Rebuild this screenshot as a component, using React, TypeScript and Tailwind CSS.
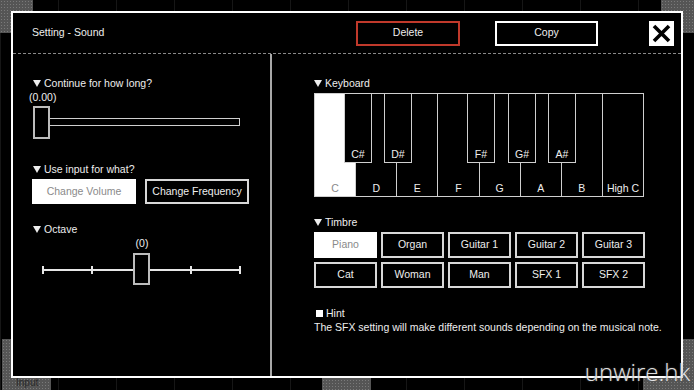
import React from 'react';

const font = "font-['Liberation_Sans','Helvetica',Arial,sans-serif]";

function Caret() {
  return (
    <svg width="8" height="7" viewBox="0 0 8 7" className="mr-[3px] shrink-0">
      <polygon points="0,0 8,0 4,7" fill="#eeeeee" />
    </svg>
  );
}

function Heading({ children }: { children: React.ReactNode }) {
  return (
    <div className="flex items-center h-[14px] text-[10.5px] leading-[14px] text-[#eeeeee]">
      <Caret />
      {children}
    </div>
  );
}

const whiteKeys = ['C', 'D', 'E', 'F', 'G', 'A', 'B', 'High C'];
const blackKeys = [
  { label: 'C#', left: 'left-[29px]' },
  { label: 'D#', left: 'left-[69px]' },
  { label: 'F#', left: 'left-[152px]' },
  { label: 'G#', left: 'left-[193px]' },
  { label: 'A#', left: 'left-[233px]' },
];

const timbres = ['Piano', 'Organ', 'Guitar 1', 'Guitar 2', 'Guitar 3', 'Cat', 'Woman', 'Man', 'SFX 1', 'SFX 2'];

function Keyboard() {
  return (
    <div className="relative mt-[3px] w-[330px] h-[104px] border border-[#cfcfcf] flex">
      {whiteKeys.map((k, i) => (
        <div
          key={k}
          className={
            'flex-1 flex items-end justify-center pb-[1px] text-[10.5px] leading-[14px] ' +
            (i < whiteKeys.length - 1 ? 'border-r border-[#cfcfcf] ' : '') +
            (i === 0 ? 'bg-white text-[#8a8a8a]' : 'text-[#eeeeee]')
          }
        >
          {k}
        </div>
      ))}
      {blackKeys.map((b) => (
        <div
          key={b.label}
          className={`absolute top-[-1px] ${b.left} w-[28px] h-[70px] bg-black border border-[#cfcfcf] flex items-end justify-center pb-[1px] text-[10.5px] leading-[14px] text-[#eeeeee]`}
        >
          {b.label}
        </div>
      ))}
    </div>
  );
}

export default function App() {
  return (
    <div className={`relative w-[694px] h-[390px] bg-black overflow-hidden ${font}`}>
      {/* background canvas */}
      <div className="absolute inset-0 bg-[linear-gradient(to_right,#161616_1px,transparent_1px)] bg-[length:58px_100%]" />
      <div className="absolute left-0 top-0 w-[33px] h-[33px] bg-[#555] bg-[radial-gradient(#7a7a7a_1px,transparent_1px)] bg-[length:3px_3px]" />
      <div className="absolute right-0 top-0 w-[33px] h-[33px] bg-[#555] bg-[radial-gradient(#7a7a7a_1px,transparent_1px)] bg-[length:3px_3px]" />
      <div className="absolute left-[2px] bottom-0 w-[49px] h-[51px] bg-[#555] bg-[radial-gradient(#7a7a7a_1px,transparent_1px)] bg-[length:3px_3px] flex items-end pl-[14px] text-[10px] text-[#2a2a2a]">
        Input
      </div>
      <div className="absolute left-[322px] bottom-0 w-[49px] h-[14px] bg-[#555] bg-[radial-gradient(#7a7a7a_1px,transparent_1px)] bg-[length:3px_3px]" />
      <div className="absolute right-0 bottom-0 w-[51px] h-[51px] bg-[#555] bg-[radial-gradient(#7a7a7a_1px,transparent_1px)] bg-[length:3px_3px]" />

      {/* dialog */}
      <div className="absolute left-[11px] top-[11px] w-[672px] h-[367px] border-2 border-white bg-black flex flex-col">
        <div className="h-[41px] shrink-0 flex items-center border-b border-dashed border-[#8a8a8a] pl-[19px] pr-[7px]">
          <div className="flex-1 text-[10.5px] text-[#eeeeee]">Setting - Sound</div>
          <button className="w-[104px] h-[25px] border-2 border-[#c0392b] text-[10.5px] text-[#eeeeee]">Delete</button>
          <button className="ml-[35px] w-[103px] h-[25px] border-2 border-white text-[10.5px] text-[#eeeeee]">Copy</button>
          <button className="ml-[51px] w-[25px] h-[25px] bg-white flex items-center justify-center">
            <svg width="19" height="19" viewBox="0 0 19 19">
              <path d="M2 2 L17 17 M17 2 L2 17" stroke="black" strokeWidth="3.6" />
            </svg>
          </button>
        </div>

        <div className="flex flex-1">
          {/* left column */}
          <div className="w-[259px] shrink-0 border-r-2 border-[#a8a8a8] pt-[22px] pl-[20px]">
            <Heading>Continue for how long?</Heading>
            <div className="ml-[-4px] h-[14px] text-[10.5px] leading-[14px] text-[#eeeeee]">(0.00)</div>
            <div className="mt-[2px] flex items-start">
              <div className="w-[17px] h-[33px] border-2 border-[#bdbdbd]" />
              <div className="mt-[12px] w-[190px] h-[8px] border border-l-0 border-[#cfcfcf]" />
            </div>

            <div className="mt-[23px]">
              <Heading>Use input for what?</Heading>
            </div>
            <div className="mt-[3px] ml-[-1px] flex gap-[9px]">
              <button className="w-[104px] h-[25px] bg-white text-[10.5px] text-[#8a8a8a]">Change Volume</button>
              <button className="w-[104px] h-[25px] border-2 border-[#d8d8d8] text-[10.5px] text-[#eeeeee]">Change Frequency</button>
            </div>

            <div className="mt-[18px]">
              <Heading>Octave</Heading>
            </div>
            <div className="ml-[9px] w-[200px] text-center h-[14px] text-[10.5px] leading-[14px] text-[#eeeeee]">(0)</div>
            <div className="relative mt-[3px] ml-[9px] w-[200px] h-[32px]">
              <svg width="200" height="32" className="absolute left-0 top-0">
                <line x1="1" y1="17" x2="199" y2="17" stroke="#e6e6e6" strokeWidth="2" />
                {[1, 50, 149, 198].map((x) => (
                  <line key={x} x1={x} y1="13" x2={x} y2="21" stroke="#e6e6e6" strokeWidth="2" />
                ))}
              </svg>
              <div className="absolute left-[91px] top-0 w-[17px] h-[32px] bg-black border-2 border-[#bdbdbd]" />
            </div>
          </div>

          {/* right column */}
          <div className="flex-1 pt-[22px] pl-[42px]">
            <Heading>Keyboard</Heading>
            <Keyboard />

            <div className="mt-[18px]">
              <Heading>Timbre</Heading>
            </div>
            <div className="mt-[3px] grid grid-cols-5 w-[331px] gap-[4px]">
              {timbres.map((t, i) => (
                <button
                  key={t}
                  className={
                    'h-[26px] text-[10.5px] ' +
                    (i === 0 ? 'bg-white text-[#8a8a8a]' : 'border-2 border-[#d8d8d8] text-[#eeeeee]')
                  }
                >
                  {t}
                </button>
              ))}
            </div>

            <div className="mt-[18px] flex items-center h-[14px] text-[10.5px] leading-[14px] text-[#eeeeee]">
              <div className="w-[7px] h-[7px] bg-white mr-[3px] ml-[2px]" />
              Hint
            </div>
            <div className="h-[14px] text-[10.5px] leading-[14px] text-[#eeeeee] whitespace-nowrap">
              The SFX setting will make different sounds depending on the musical note.
            </div>
          </div>
        </div>
      </div>

      {/* watermark */}
      <div className="absolute right-[4px] bottom-[4px] text-[24px] leading-[28px] font-light text-white/85 [text-shadow:0_0_2px_#555] font-['Open_Sans',sans-serif]">
        unwire.hk
      </div>
    </div>
  );
}
